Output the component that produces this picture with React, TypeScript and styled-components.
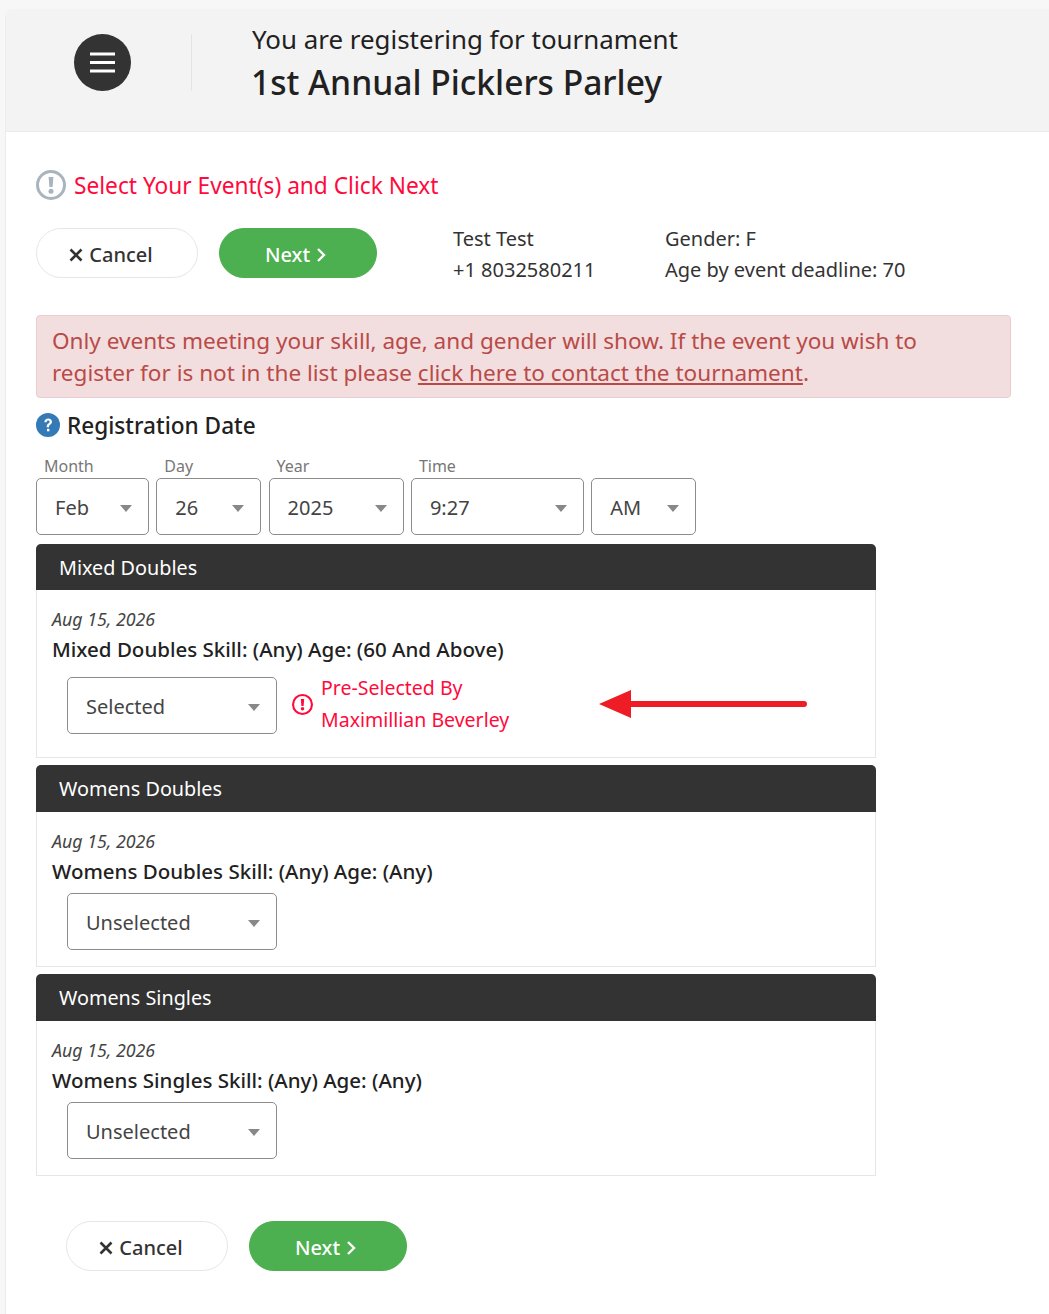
import styled, { createGlobalStyle } from "styled-components";

const GlobalStyle = createGlobalStyle`
  html, body {
    margin: 0;
    padding: 0;
    background: #f7f7f7;
    font-family: "Noto Sans", "Liberation Sans", sans-serif;
    color: #212121;
  }
`;

const Card = styled.div`
  margin: 9px 0 0 5px;
  height: 1305px;
  background: #fff;
  border-left: 1px solid #ececec;
  border-top-left-radius: 8px;
  overflow: hidden;
`;

const Header = styled.header`
  height: 122px;
  background: #f3f3f3;
  border-bottom: 1px solid #ebebeb;
  display: flex;
  align-items: flex-start;
`;

const MenuCell = styled.div`
  width: 186px;
  height: 57px;
  margin-top: 25px;
  border-right: 1px solid #e4e4e4;
  display: flex;
  align-items: center;
  padding-left: 68px;
  box-sizing: border-box;
`;

const MenuButton = styled.button`
  width: 57px;
  height: 57px;
  border: 0;
  border-radius: 50%;
  background: #333;
  padding: 0;
  display: flex;
  align-items: center;
  justify-content: center;
`;

const HeaderText = styled.div`
  margin-left: 60px;
  padding-top: 11px;
`;

const HeaderLine = styled.div`
  font-size: 25.9px;
  line-height: 38px;
  color: #212121;
`;

const TournamentName = styled.div`
  margin-left: -1px;
  font-size: 33.6px;
  font-weight: 500;
  line-height: 48px;
  color: #212121;
`;

const Content = styled.main`
  padding: 36px 0 0 30px;
`;

const Instruction = styled.div`
  display: flex;
  align-items: center;
  gap: 8px;
  height: 34px;
  font-size: 22.7px;
  color: #ff0a3c;
`;

const ActionRow = styled.div<{ $inset?: number; $top: number }>`
  display: flex;
  margin-top: ${(props) => props.$top}px;
  padding-left: ${(props) => props.$inset ?? 0}px;
`;

const PillButton = styled.button<{ $primary?: boolean }>`
  width: ${(props) => (props.$primary ? 158 : 162)}px;
  height: 50px;
  margin-right: ${(props) => (props.$primary ? 0 : 21)}px;
  border-radius: 25px;
  border: 1px solid ${(props) => (props.$primary ? "#4caf50" : "#e6e6e6")};
  background: ${(props) => (props.$primary ? "#4caf50" : "#fff")};
  color: ${(props) => (props.$primary ? "#fff" : "#333")};
  font-family: inherit;
  font-size: 20px;
  font-weight: 500;
  display: flex;
  align-items: center;
  justify-content: center;
  gap: 6px;
  padding: 3px ${(props) => (props.$primary ? 5 : 12)}px 0 0;
`;

const Info = styled.div<{ $width: number }>`
  width: ${(props) => props.$width}px;
  font-size: 20px;
  line-height: 31px;
  margin-top: -5px;
  color: #333;
`;

const InfoGroup = styled.div`
  display: flex;
  margin-left: 76px;
`;

const Notice = styled.div`
  width: 975px;
  height: 83px;
  box-sizing: border-box;
  margin-top: 30px;
  padding: 9px 15px;
  background: #f2dede;
  border: 1px solid #ebccd1;
  border-radius: 4px;
  font-size: 22.55px;
  line-height: 32px;
  color: #b94a48;
  a {
    color: inherit;
  }
`;

const SectionTitle = styled.div`
  display: flex;
  align-items: center;
  gap: 7px;
  height: 30px;
  margin-top: 12px;
  font-size: 22.6px;
  font-weight: 500;
  color: #212121;
`;

const DateRow = styled.div`
  display: flex;
  gap: 7.3px;
  margin-top: 14px;
`;

const Field = styled.div``;

const FieldLabel = styled.div`
  padding-left: 8px;
  height: 24px;
  font-size: 16px;
  line-height: 24px;
  color: #777;
`;

const SelectBox = styled.div<{ $width: number; $offset?: number }>`
  position: relative;
  width: ${(props) => props.$width}px;
  height: 57px;
  box-sizing: border-box;
  margin-top: ${(props) => props.$offset ?? 0}px;
  border: 1px solid #8c8c8c;
  border-radius: 5px;
  padding: 2px 0 0 18px;
  display: flex;
  align-items: center;
  font-size: 20px;
  color: #444;
  background: #fff;
  &::after {
    content: "";
    position: absolute;
    right: 16px;
    top: 26px;
    border-left: 6px solid transparent;
    border-right: 6px solid transparent;
    border-top: 7px solid #888;
  }
`;

const Panel = styled.section<{ $height: number }>`
  width: 840px;
  height: ${(props) => props.$height}px;
  box-sizing: border-box;
  margin-top: 7px;
  border: 1px solid #e6e6e6;
  border-top: 0;
  border-radius: 5px 5px 0 0;
  &:first-of-type {
    margin-top: 9px;
  }
`;

const PanelHeader = styled.div<{ $height: number }>`
  height: ${(props) => props.$height}px;
  margin: 0 -1px;
  padding: 1px 0 0 23px;
  box-sizing: border-box;
  background: #333;
  border-radius: 5px 5px 0 0;
  color: #fff;
  font-size: 19.8px;
  line-height: 46px;
`;

const PanelBody = styled.div`
  padding: 14px 0 0 15px;
`;

const EventDate = styled.div`
  font-size: 17.8px;
  line-height: 30px;
  font-style: italic;
  color: #444;
`;

const EventName = styled.div`
  font-size: 20.5px;
  line-height: 30px;
  font-weight: 500;
  color: #212121;
  margin-bottom: 7px;
`;

const EventControls = styled.div`
  display: flex;
  align-items: flex-start;
  padding-left: 15px;
`;

const PreSelected = styled.div`
  display: flex;
  align-items: center;
  gap: 8px;
  margin: 1px 0 0 15px;
  font-size: 19.5px;
  line-height: 32px;
  color: #ff0a3c;
`;

const ArrowMark = styled.svg`
  margin-left: 90px;
  align-self: center;
`;

const MenuIcon = () => (
  <svg width="25" height="21" viewBox="0 0 25 21">
    <path d="M0 2h25M0 10.5h25M0 19h25" stroke="#fff" strokeWidth="3.2" />
  </svg>
);

const CrossIcon = () => (
  <svg width="14" height="14" viewBox="0 0 14 14">
    <path d="M1.5 1.5l11 11M12.5 1.5l-11 11" stroke="#333" strokeWidth="2.6" />
  </svg>
);

const ChevronIcon = () => (
  <svg width="10" height="16" viewBox="0 0 10 16">
    <path d="M2 2l6 6-6 6" fill="none" stroke="#fff" strokeWidth="2.4" />
  </svg>
);

const AlertIcon = ({ size, color, width }: { size: number; color: string; width: number }) => (
  <svg width={size} height={size} viewBox="0 0 30 30">
    <circle cx="15" cy="15" r={15 - width / 2} fill="none" stroke={color} strokeWidth={width} />
    <path d="M12.6 7h4.8l-.8 10h-3.2z" fill={color} />
    <circle cx="15" cy="21.2" r="2.5" fill={color} />
  </svg>
);

const HelpIcon = () => (
  <svg width="24" height="24" viewBox="0 0 24 24">
    <circle cx="12" cy="12" r="12" fill="#337ab7" />
    <path
      d="M8.3 9.2c.2-2.3 1.8-3.6 3.9-3.6 2.2 0 3.8 1.3 3.8 3.2 0 1.5-.8 2.2-1.8 2.9-.8.6-1.2 1-1.2 2v.6h-2.3v-.9c0-1.5.6-2.2 1.6-2.9.8-.6 1.3-1 1.3-1.8 0-.8-.6-1.3-1.4-1.3-.9 0-1.5.6-1.6 1.8z"
      fill="#fff"
    />
    <rect x="11" y="15.8" width="2.4" height="2.5" fill="#fff" />
  </svg>
);

const Actions = ({ inset, top, children }: { inset?: number; top: number; children?: React.ReactNode }) => (
  <ActionRow $inset={inset} $top={top}>
    <PillButton>
      <CrossIcon />
      Cancel
    </PillButton>
    <PillButton $primary>
      Next
      <ChevronIcon />
    </PillButton>
    {children}
  </ActionRow>
);

const dateFields = [
  { label: "Month", value: "Feb", width: 113 },
  { label: "Day", value: "26", width: 105 },
  { label: "Year", value: "2025", width: 135 },
  { label: "Time", value: "9:27", width: 173 },
  { label: "", value: "AM", width: 105 },
];

const events = [
  { title: "Mixed Doubles", name: "Mixed Doubles Skill: (Any) Age: (60 And Above)", value: "Selected", height: 214, head: 46, picked: true },
  { title: "Womens Doubles", name: "Womens Doubles Skill: (Any) Age: (Any)", value: "Unselected", height: 202, head: 47 },
  { title: "Womens Singles", name: "Womens Singles Skill: (Any) Age: (Any)", value: "Unselected", height: 202, head: 47 },
];

function App() {
  return (
    <>
      <GlobalStyle />
      <Card>
        <Header>
          <MenuCell>
            <MenuButton aria-label="Menu">
              <MenuIcon />
            </MenuButton>
          </MenuCell>
          <HeaderText>
            <HeaderLine>You are registering for tournament</HeaderLine>
            <TournamentName>1st Annual Picklers Parley</TournamentName>
          </HeaderText>
        </Header>
        <Content>
          <Instruction>
            <AlertIcon size={30} color="#a9b4be" width={3} />
            Select Your Event(s) and Click Next
          </Instruction>
          <Actions top={26}>
            <InfoGroup>
              <Info $width={212}>
                Test Test
                <br />
                +1 8032580211
              </Info>
              <Info $width={300}>
                Gender: F
                <br />
                Age by event deadline: 70
              </Info>
            </InfoGroup>
          </Actions>
          <Notice>
            Only events meeting your skill, age, and gender will show. If the event you wish to register for is not in
            the list please <a href="#contact">click here to contact the tournament</a>.
          </Notice>
          <SectionTitle>
            <HelpIcon />
            Registration Date
          </SectionTitle>
          <DateRow>
            {dateFields.map((field) => (
              <Field key={field.value}>
                <FieldLabel>{field.label}</FieldLabel>
                <SelectBox $width={field.width}>{field.value}</SelectBox>
              </Field>
            ))}
          </DateRow>
          {events.map((event) => (
            <Panel key={event.title} $height={event.height}>
              <PanelHeader $height={event.head}>{event.title}</PanelHeader>
              <PanelBody>
                <EventDate>Aug 15, 2026</EventDate>
                <EventName>{event.name}</EventName>
                <EventControls>
                  <SelectBox $width={210} $offset={event.picked ? 6 : 0}>
                    {event.value}
                  </SelectBox>
                  {event.picked && (
                    <>
                      <PreSelected>
                        <AlertIcon size={21} color="#ff0a3c" width={3} />
                        <div>
                          Pre-Selected By
                          <br />
                          Maximillian Beverley
                        </div>
                      </PreSelected>
                      <ArrowMark width="208" height="28" viewBox="0 0 208 28">
                        <path d="M0 14L32 0v11h173a3 3 0 0 1 0 6H32v11z" fill="#ee1c25" />
                      </ArrowMark>
                    </>
                  )}
                </EventControls>
              </PanelBody>
            </Panel>
          ))}
          <Actions inset={30} top={45} />
        </Content>
      </Card>
    </>
  );
}

export default App;
